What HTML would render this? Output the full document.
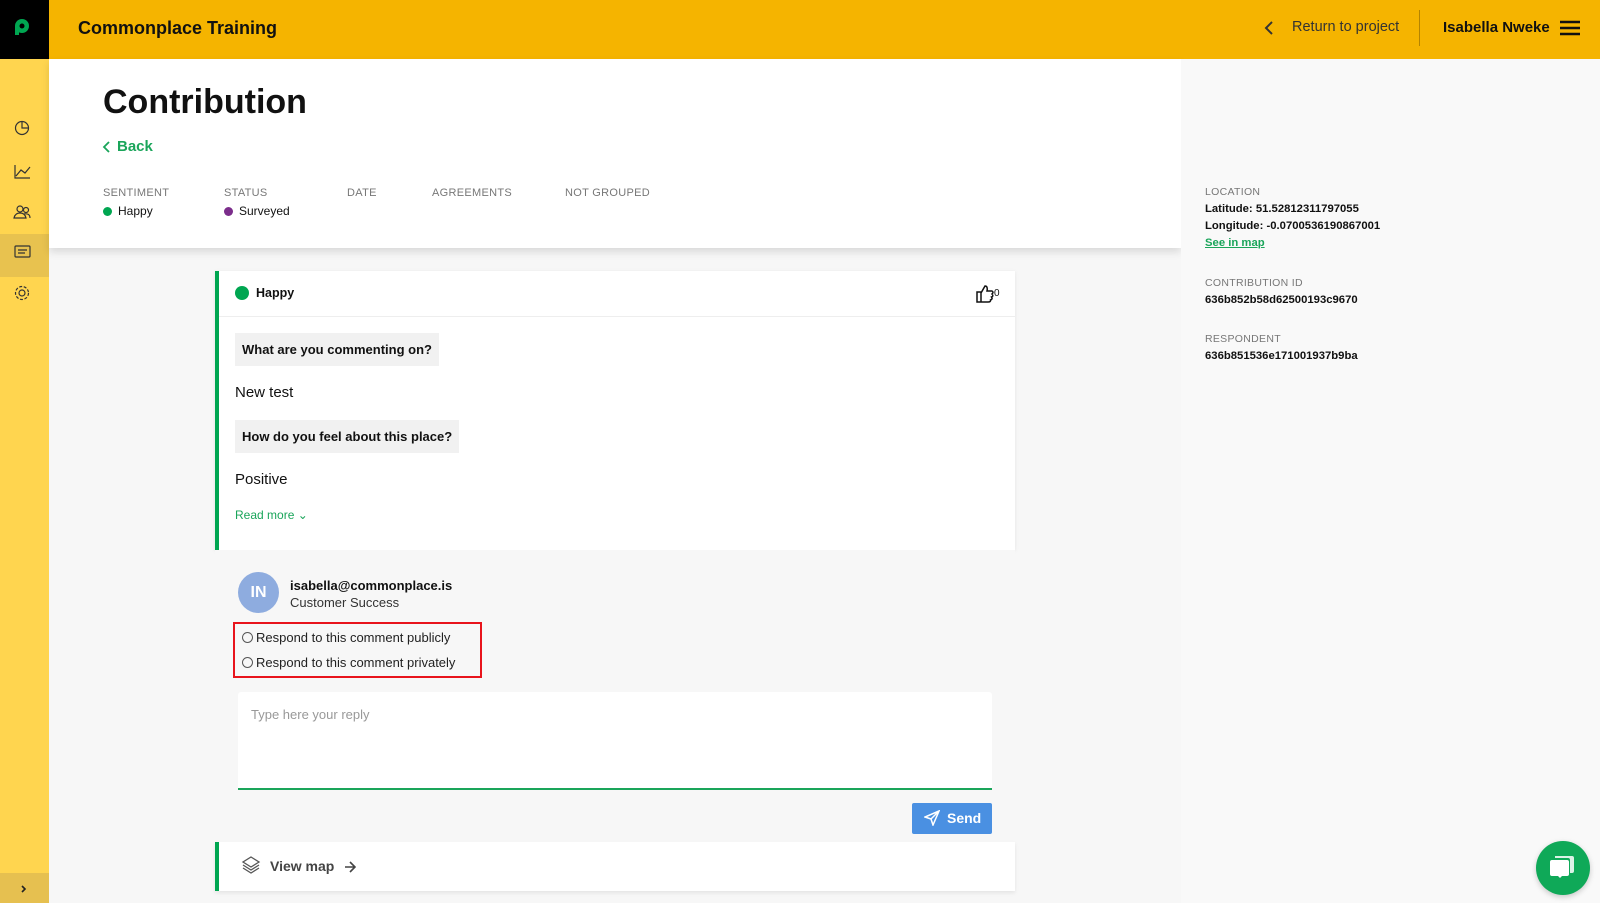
<!DOCTYPE html>
<html><head><meta charset="utf-8"><style>
*{box-sizing:border-box;margin:0;padding:0}
body{width:1600px;height:903px;overflow:hidden;background:#f7f7f7;font-family:"Liberation Sans",sans-serif;color:#111;position:relative}
.a{position:absolute}
.hdr{left:0;top:0;width:1600px;height:59px;background:#f5b400}
.logo{left:0;top:0;width:49px;height:59px;background:#000}
.side{left:0;top:59px;width:49px;height:844px;background:#ffd54f}
.lbl{font-size:11px;color:#777;letter-spacing:.3px}
.val{font-size:11.3px;font-weight:bold;color:#111}
.dot{display:inline-block;width:9px;height:9px;border-radius:50%;margin-right:6px;vertical-align:-1px}
.q{background:#f1f1f1;font-weight:bold;font-size:13px;padding:9px 7px;display:inline-block}
</style></head><body>
<div class="a hdr"></div>
<div class="a logo"><svg width="49" height="59"><circle cx="22" cy="26" r="7" fill="#00a651"/><circle cx="22" cy="26" r="2.5" fill="#000"/><rect x="15" y="26" width="4" height="9" fill="#00a651"/></svg></div>
<div class="a" style="left:78px;top:18px;font-size:18px;font-weight:bold">Commonplace Training</div>
<svg class="a" style="left:1262px;top:20px" width="14" height="16"><path d="M10 2 L4 8 L10 14" stroke="#333" stroke-width="2" fill="none"/></svg>
<div class="a" style="left:1292px;top:19px;font-size:14.5px;color:#333">Return to project</div>
<div class="a" style="left:1419px;top:10px;width:1px;height:36px;background:#b48400"></div>
<div class="a" style="left:1443px;top:19px;font-size:15px;font-weight:bold">Isabella Nweke</div>
<svg class="a" style="left:1560px;top:20px" width="20" height="16"><path d="M0 2H20M0 8H20M0 14H20" stroke="#111" stroke-width="2.4"/></svg>
<div class="a side"></div>
<div class="a" style="left:0;top:234px;width:49px;height:43px;background:#e8c24f"></div>
<div class="a" style="left:0;top:873px;width:49px;height:30px;background:#e6c050"></div>
<svg class="a" style="left:0;top:100px" width="49" height="803">
<g stroke="#333" stroke-width="1.2" fill="none">
<circle cx="22" cy="28" r="6.5"/><path d="M22 21.5V28H28.5"/>
<path d="M15 65V78H30M16 76L21 70L25 73L30 67"/>
<circle cx="20" cy="109" r="3"/><circle cx="26" cy="110" r="2.5"/><path d="M14 118Q15 113 20 113Q25 113 26 118ZM24 114Q30 113 30 118"/>
<rect x="15" y="146" width="15" height="11" rx="1"/><path d="M18 150H27M18 153H25"/>
<circle cx="22" cy="193" r="3"/><circle cx="22" cy="193" r="6.5" stroke-dasharray="3 1.6"/>
<path d="M22 786L25 789L22 792" stroke="#222" stroke-width="1.6"/>
</g></svg>
<div class="a" style="left:49px;top:59px;width:1132px;height:189px;background:#fff;box-shadow:0 4px 8px rgba(0,0,0,.12)"></div>
<div class="a" style="left:1181px;top:59px;width:419px;height:844px;background:#f9f9f9"></div>
<div class="a" style="left:103px;top:83px;font-size:34px;font-weight:bold">Contribution</div>
<svg class="a" style="left:102px;top:140px" width="10" height="14"><path d="M7 2L2 7L7 12" stroke="#1aa55a" stroke-width="1.8" fill="none"/></svg>
<div class="a" style="left:117px;top:138px;font-size:15px;font-weight:bold;color:#1aa55a">Back</div>
<div class="a lbl" style="left:103px;top:187px">SENTIMENT</div>
<div class="a lbl" style="left:224px;top:187px">STATUS</div>
<div class="a lbl" style="left:347px;top:187px">DATE</div>
<div class="a lbl" style="left:432px;top:187px">AGREEMENTS</div>
<div class="a lbl" style="left:565px;top:187px">NOT GROUPED</div>
<div class="a" style="left:103px;top:204px;font-size:12px"><span class="dot" style="background:#00a651"></span>Happy</div>
<div class="a" style="left:224px;top:204px;font-size:12px"><span class="dot" style="background:#7b2d8b"></span>Surveyed</div>
<div class="a lbl" style="left:1205px;top:186px;font-size:10.5px">LOCATION</div>
<div class="a val" style="left:1205px;top:203px">Latitude: 51.52812311797055</div>
<div class="a val" style="left:1205px;top:220px">Longitude: -0.0700536190867001</div>
<div class="a val" style="left:1205px;top:237px;color:#1aa55a;text-decoration:underline">See in map</div>
<div class="a lbl" style="left:1205px;top:277px;font-size:10.5px">CONTRIBUTION ID</div>
<div class="a val" style="left:1205px;top:294px">636b852b58d62500193c9670</div>
<div class="a lbl" style="left:1205px;top:333px;font-size:10.5px">RESPONDENT</div>
<div class="a val" style="left:1205px;top:350px">636b851536e171001937b9ba</div>
<div class="a" style="left:215px;top:271px;width:800px;height:279px;background:#fff;border-left:4px solid #00a651;box-shadow:0 1px 4px rgba(0,0,0,.08)"></div>
<div class="a" style="left:219px;top:316px;width:796px;height:1px;background:#eee"></div>
<div class="a" style="left:235px;top:286px;width:14px;height:14px;border-radius:50%;background:#00a651"></div>
<div class="a" style="left:256px;top:286px;font-size:12.5px;font-weight:bold">Happy</div>
<svg class="a" style="left:976px;top:284px" width="18" height="19"><path d="M1 8H5V18H1ZM5 9L9 2Q12 2 11 7H16Q18 8 16 10Q18 12 15.5 13Q17 15 14.5 16Q15 18 12 18H5" stroke="#111" stroke-width="1.5" fill="none"/></svg>
<div class="a" style="left:994px;top:288px;font-size:10px">0</div>
<div class="a q" style="left:235px;top:333px">What are you commenting on?</div>
<div class="a" style="left:235px;top:384px;font-size:15px">New test</div>
<div class="a q" style="left:235px;top:420px">How do you feel about this place?</div>
<div class="a" style="left:235px;top:471px;font-size:15px">Positive</div>
<div class="a" style="left:235px;top:508px;font-size:12px;color:#1aa55a">Read more &#8964;</div>
<div class="a" style="left:215px;top:550px;width:800px;height:292px;background:#f7f7f7"></div>
<div class="a" style="left:238px;top:572px;width:41px;height:41px;border-radius:50%;background:#8eacdf;color:#fff;font-weight:bold;font-size:16px;text-align:center;line-height:41px">IN</div>
<div class="a" style="left:290px;top:578px;font-size:13px;font-weight:bold">isabella@commonplace.is</div>
<div class="a" style="left:290px;top:595px;font-size:13px;color:#333">Customer Success</div>
<div class="a" style="left:233px;top:622px;width:249px;height:56px;border:2px solid #e8141c"></div>
<div class="a" style="left:242px;top:630px;font-size:13px;color:#222"><span style="display:inline-block;width:11px;height:11px;border:1px solid #555;border-radius:50%;vertical-align:-1px;margin-right:3px"></span>Respond to this comment publicly</div>
<div class="a" style="left:242px;top:655px;font-size:13px;color:#222"><span style="display:inline-block;width:11px;height:11px;border:1px solid #555;border-radius:50%;vertical-align:-1px;margin-right:3px"></span>Respond to this comment privately</div>
<div class="a" style="left:238px;top:692px;width:754px;height:98px;background:#fff;border-bottom:2px solid #1aa55a;border-radius:3px 3px 0 0"></div>
<div class="a" style="left:251px;top:707px;font-size:13px;color:#999">Type here your reply</div>
<div class="a" style="left:912px;top:803px;width:80px;height:31px;background:#4a90e2;border-radius:2px;color:#fff;font-weight:bold;font-size:14px;line-height:31px;padding-left:35px">Send</div>
<svg class="a" style="left:924px;top:810px" width="16" height="16"><path d="M15 1L1 7L7 9L9 15Z M7 9L15 1" stroke="#fff" stroke-width="1.5" fill="none"/></svg>
<div class="a" style="left:215px;top:842px;width:800px;height:49px;background:#fff;border-left:4px solid #00a651;box-shadow:0 2px 4px rgba(0,0,0,.08)"></div>
<svg class="a" style="left:241px;top:856px" width="20" height="20"><path d="M10 1L18 6L10 11L2 6Z M2 9L10 14L18 9 M2 12L10 17L18 12" stroke="#555" stroke-width="1.3" fill="none"/></svg>
<div class="a" style="left:270px;top:858px;font-size:14px;font-weight:bold;color:#444">View map</div>
<svg class="a" style="left:344px;top:861px" width="12" height="12"><path d="M1 6H11M6 1L11 6L6 11" stroke="#444" stroke-width="1.6" fill="none"/></svg>
<div class="a" style="left:1536px;top:841px;width:54px;height:54px;border-radius:50%;background:#0fa958;box-shadow:0 2px 6px rgba(0,0,0,.2)"></div>
<svg class="a" style="left:1548px;top:853px" width="30" height="30"><path d="M7 3H24Q26 3 26 5V18Q26 20 24 20H22V7Q22 5 20 5H7Z" fill="#fff" opacity=".85"/><path d="M4 7H19Q21 7 21 9V21Q21 23 19 23H14L12 25L10 23H4Q2 23 2 21V9Q2 7 4 7Z" fill="#fff"/></svg>
</body></html>
